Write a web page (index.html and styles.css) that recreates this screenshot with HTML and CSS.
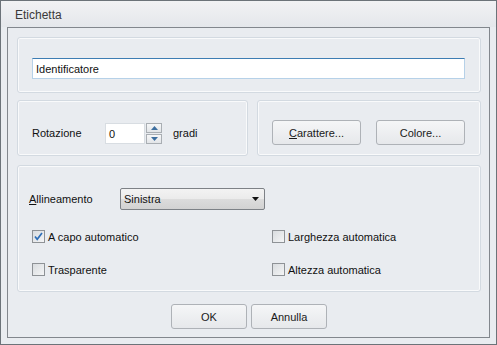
FILE: index.html
```html
<!DOCTYPE html>
<html lang="it">
<head>
<meta charset="utf-8">
<title>Etichetta</title>
<link rel="stylesheet" href="styles.css">
</head>
<body>
<div class="win">
  <div class="titlebar">Etichetta</div>
  <div class="frame">
    <div class="group g-name">
      <div class="textbox">Identificatore</div>
    </div>
    <div class="row">
      <div class="group g-rot">
        <span class="lbl rot-lbl">Rotazione</span>
        <div class="spinbox">0</div>
        <div class="spin-btns">
          <div class="sbtn"><svg width="7" height="4" viewBox="0 0 7 4"><path d="M3.5 0 L7 4 L0 4 Z" fill="#3e6f9f"/></svg></div>
          <div class="sbtn"><svg width="7" height="4" viewBox="0 0 7 4"><path d="M0 0 L7 0 L3.5 4 Z" fill="#3e6f9f"/></svg></div>
        </div>
        <span class="lbl unit">gradi</span>
      </div>
      <div class="group g-btns">
        <div class="btn wide"><span class="ul">C</span>arattere...</div>
        <div class="btn wide">Colore...</div>
      </div>
    </div>
    <div class="group g-opts">
      <div class="align-row">
        <span class="lbl align-lbl"><span class="ul">A</span>llineamento</span>
        <div class="select">
          <span>Sinistra</span>
          <svg width="7" height="4" viewBox="0 0 7 4"><path d="M0 0 L7 0 L3.5 4 Z" fill="#111"/></svg>
        </div>
      </div>
      <div class="checks">
        <div class="chk"><span class="box checked"><svg width="11" height="11" viewBox="0 0 11 11"><path d="M2 5.5 L4.2 8.3 L9 2" fill="none" stroke="#2f6fb8" stroke-width="1.7"/></svg></span>A capo automatico</div>
        <div class="chk"><span class="box"></span>Larghezza automatica</div>
        <div class="chk"><span class="box"></span>Trasparente</div>
        <div class="chk"><span class="box"></span>Altezza automatica</div>
      </div>
    </div>
    <div class="actions">
      <div class="btn act">OK</div>
      <div class="btn act">Annulla</div>
    </div>
  </div>
</div>
</body>
</html>
```

FILE: styles.css
```css
html, body {
  margin: 0;
  padding: 0;
  background: #e9ecf0;
}
body {
  font-family: "Liberation Sans", Arial, sans-serif;
  font-size: 11px;
  color: #111;
}
.win {
  box-sizing: border-box;
  width: 497px;
  height: 345px;
  border: 1px solid #6c7379;
  background: #e9ecf0;
  display: flex;
  flex-direction: column;
}
.titlebar {
  box-sizing: border-box;
  height: 26px;
  padding: 7px 0 0 14px;
  font-size: 12px;
  color: #3a3a3a;
  background: linear-gradient(#f1f2f4, #e4e7eb);
}
.frame {
  box-sizing: border-box;
  margin: 0 6px 6px 6px;
  flex: 1;
  border: 1px solid #82878d;
  padding: 9px 8px 0 9px;
  display: flex;
  flex-direction: column;
}
.group {
  box-sizing: border-box;
  border: 1px solid #d3dae1;
  box-shadow: inset 0 0 0 1px #f9fafb;
  border-radius: 3px;
}
.g-name {
  height: 56px;
  padding: 20px 15px 0 14px;
}
.textbox {
  box-sizing: border-box;
  height: 21px;
  background: #fff;
  border: 1px solid #b6d1e8;
  border-top-color: #3d7db3;
  padding: 3px 0 0 3px;
  line-height: 14px;
  color: #111;
}
.row {
  display: flex;
  gap: 9px;
  margin-top: 7px;
}
.g-rot {
  width: 231px;
  height: 56px;
  display: flex;
  align-items: flex-start;
  padding: 22px 0 0 14px;
}
.lbl {
  line-height: 21px;
}
.rot-lbl {
  width: 73px;
}
.spinbox {
  box-sizing: border-box;
  width: 40px;
  height: 21px;
  background: #fff;
  border: 1px solid #d8dde2;
  padding: 3px 0 0 3px;
  line-height: 14px;
}
.spin-btns {
  margin-left: 1px;
  display: flex;
  flex-direction: column;
  gap: 1px;
}
.sbtn {
  box-sizing: border-box;
  width: 16px;
  height: 10px;
  border: 1px solid #a9aeb3;
  background: linear-gradient(#f6f7f8, #e2e5e8);
  display: flex;
  align-items: center;
  justify-content: center;
}
.unit {
  margin-left: 11px;
}
.g-btns {
  flex: 1;
  height: 56px;
  display: flex;
  align-items: flex-start;
  gap: 15px;
  padding: 19px 0 0 14px;
}
.btn {
  box-sizing: border-box;
  height: 25px;
  border: 1px solid #aeb2b7;
  border-radius: 3px;
  background: linear-gradient(#f5f6f7, #e6e8eb);
  display: flex;
  align-items: center;
  justify-content: center;
  color: #1a1a1a;
}
.wide {
  width: 89px;
}
.ul {
  text-decoration: underline;
}
.g-opts {
  margin-top: 9px;
  height: 127px;
  padding: 22px 0 0 11px;
}
.align-row {
  display: flex;
  align-items: center;
}
.align-lbl {
  width: 91px;
}
.select {
  box-sizing: border-box;
  width: 145px;
  height: 22px;
  border: 1px solid #7d8186;
  border-radius: 2px;
  background: linear-gradient(#f3f3f3 0%, #ebebeb 50%, #dcdcdc 51%, #d2d2d2 100%);
  display: flex;
  align-items: center;
  justify-content: space-between;
  padding: 0 5px 0 3px;
}
.checks {
  margin-top: 20px;
  margin-left: 3px;
  display: grid;
  grid-template-columns: 240px 1fr;
  row-gap: 20px;
}
.chk {
  display: flex;
  align-items: center;
  height: 13px;
  gap: 3px;
}
.box {
  box-sizing: border-box;
  width: 13px;
  height: 13px;
  border: 1px solid #8e9296;
  background: linear-gradient(135deg, #d9dcdf, #f4f5f6);
  display: flex;
  align-items: center;
  justify-content: center;
}
.actions {
  display: flex;
  justify-content: center;
  gap: 4px;
  margin-top: 12px;
}
.act {
  width: 76px;
}
```
